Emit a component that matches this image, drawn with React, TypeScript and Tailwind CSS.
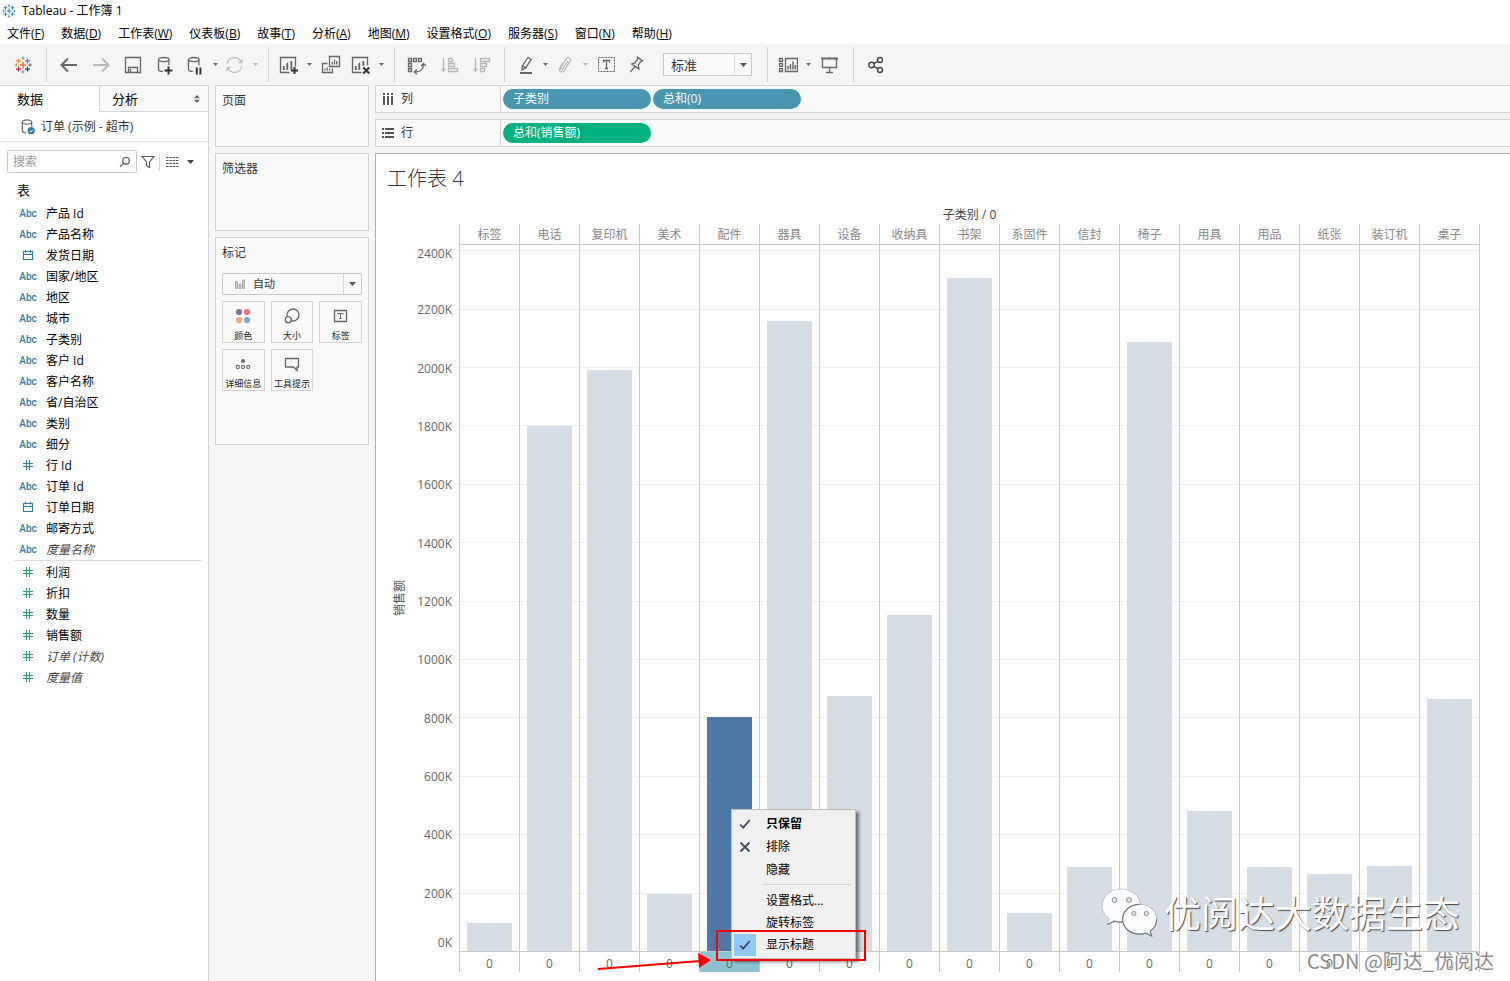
import type { ReactNode } from 'react';
import clsx from 'clsx';

const MENUS = [
  ['文件', 'F'],
  ['数据', 'D'],
  ['工作表', 'W'],
  ['仪表板', 'B'],
  ['故事', 'T'],
  ['分析', 'A'],
  ['地图', 'M'],
  ['设置格式', 'O'],
  ['服务器', 'S'],
  ['窗口', 'N'],
  ['帮助', 'H'],
] as const;

type FieldKind = 'text' | 'date' | 'number';

interface Field {
  name: string;
  kind: FieldKind;
  generated?: boolean;
}

const DIMENSIONS: Field[] = [
  { name: '产品 Id', kind: 'text' },
  { name: '产品名称', kind: 'text' },
  { name: '发货日期', kind: 'date' },
  { name: '国家/地区', kind: 'text' },
  { name: '地区', kind: 'text' },
  { name: '城市', kind: 'text' },
  { name: '子类别', kind: 'text' },
  { name: '客户 Id', kind: 'text' },
  { name: '客户名称', kind: 'text' },
  { name: '省/自治区', kind: 'text' },
  { name: '类别', kind: 'text' },
  { name: '细分', kind: 'text' },
  { name: '行 Id', kind: 'number' },
  { name: '订单 Id', kind: 'text' },
  { name: '订单日期', kind: 'date' },
  { name: '邮寄方式', kind: 'text' },
  { name: '度量名称', kind: 'text', generated: true },
];

const MEASURES: Field[] = [
  { name: '利润', kind: 'number' },
  { name: '折扣', kind: 'number' },
  { name: '数量', kind: 'number' },
  { name: '销售额', kind: 'number' },
  { name: '订单 (计数)', kind: 'number', generated: true },
  { name: '度量值', kind: 'number', generated: true },
];

// Sales in thousands
const SALES = [
  { name: '标签', value: 96 },
  { name: '电话', value: 1800 },
  { name: '复印机', value: 1992 },
  { name: '美术', value: 195 },
  { name: '配件', value: 802 },
  { name: '器具', value: 2160 },
  { name: '设备', value: 874 },
  { name: '收纳具', value: 1152 },
  { name: '书架', value: 2307 },
  { name: '系固件', value: 130 },
  { name: '信封', value: 288 },
  { name: '椅子', value: 2088 },
  { name: '用具', value: 480 },
  { name: '用品', value: 288 },
  { name: '纸张', value: 264 },
  { name: '装订机', value: 291 },
  { name: '桌子', value: 864 },
];

const SELECTED = '配件';
const AXIS_MAX = 2421;
const TICKS = Array.from({ length: 13 }, (_, i) => i * 200);

const percent = (value: number) => `${(value / AXIS_MAX) * 100}%`;

/* ── Icons ── */

function Icon({ children, faded }: { children: ReactNode; faded?: boolean }) {
  return (
    <svg
      width="20"
      height="20"
      viewBox="0 0 20 20"
      fill="none"
      strokeWidth="1.3"
      className={clsx('shrink-0', faded ? 'stroke-[#b8b8b8]' : 'stroke-[#666666]')}
      aria-hidden="true"
    >
      {children}
    </svg>
  );
}

function Caret({ faded }: { faded?: boolean }) {
  return (
    <svg width="5" height="3" viewBox="0 0 5 3" aria-hidden="true">
      <path d="M0 0h5L2.5 3z" fill={faded ? '#b8b8b8' : '#666666'} />
    </svg>
  );
}

function TableauMark({ mono, size }: { mono?: boolean; size: number }) {
  const pick = (color: string) => (mono ? '#3a86b8' : color);
  return (
    <svg width={size} height={size} viewBox="0 0 18 18" fill="none" strokeWidth="1.3" aria-hidden="true">
      <path d="M9 5.8v6.4M5.8 9h6.4" stroke={pick('#e8762c')} strokeWidth="1.5" />
      <path d="M4.5 2.4v5M2 4.9h5" stroke={pick('#eb912c')} />
      <path d="M13.5 2.4v5M11 4.9h5" stroke={pick('#59879b')} />
      <path d="M4.5 10.6v5M2 13.1h5" stroke={pick('#c72035')} />
      <path d="M13.5 10.6v5M11 13.1h5" stroke={pick('#1f447e')} />
      <path d="M9 .4v3.4M7.3 2.1h3.4" stroke={pick('#7099a6')} strokeWidth="1" />
      <path d="M9 14.2v3.4M7.3 15.9h3.4" stroke={pick('#7099a6')} strokeWidth="1" />
      <path d="M2 7.3v3.4M.3 9h3.4" stroke={pick('#eb912c')} strokeWidth="1" />
      <path d="M16 7.3v3.4M14.3 9h3.4" stroke={pick('#5b6591')} strokeWidth="1" />
    </svg>
  );
}

function CylinderPath() {
  return (
    <>
      <ellipse cx="8.7" cy="4.6" rx="5.2" ry="2.1" />
      <path d="M3.5 4.6v9.8c0 1.1 2 1.9 4.4 2M13.9 4.6v5.6" />
    </>
  );
}

function FieldIcon({ kind, measure }: { kind: FieldKind; measure?: boolean }) {
  if (kind === 'text') {
    return <span className="pt-0.5 font-[Roboto,sans-serif] text-[10px] font-medium text-[#2f7d9e]">Abc</span>;
  }
  return (
    <svg
      width="12"
      height="12"
      viewBox="0 0 12 12"
      fill="none"
      strokeWidth="1.1"
      className={measure ? 'stroke-[#2f9e78]' : 'stroke-[#2f7d9e]'}
      aria-hidden="true"
    >
      {kind === 'date' ? (
        <path d="M1.5 2.5h9v8h-9zM1.5 5.5h9M3.5 .8v2.6M8.5 .8v2.6" />
      ) : (
        <path d="M4.5 1v10M7.5 1v10M1 4.5h10M1 7.5h10" />
      )}
    </svg>
  );
}

/* ── Toolbar ── */

function Tool({ label, narrow, children }: { label: string; narrow?: boolean; children: ReactNode }) {
  return (
    <button
      type="button"
      aria-label={label}
      className={clsx('flex h-8 items-center justify-center hover:bg-[#e4e4e4]', narrow ? 'w-7' : 'w-8')}
    >
      {children}
    </button>
  );
}

function ToolMenu({ label, faded }: { label: string; faded?: boolean }) {
  return (
    <button type="button" aria-label={label} className="flex h-8 w-3 items-center justify-center hover:bg-[#e4e4e4]">
      <Caret faded={faded} />
    </button>
  );
}

function ToolGroup({ children }: { children: ReactNode }) {
  return <div className="flex h-[35px] items-center border-l border-[#d4d4d4] pr-[7px] pl-1.5">{children}</div>;
}

function Toolbar() {
  return (
    <div className="flex h-[41px] shrink-0 items-center bg-[#f5f5f5]">
      <button type="button" aria-label="Tableau" className="flex w-[46px] items-center justify-center">
        <TableauMark size={18} />
      </button>

      <ToolGroup>
        <Tool label="撤消">
          <Icon>
            <path d="M18 10H2.8M9 3.5 2.5 10 9 16.5" strokeWidth="2" />
          </Icon>
        </Tool>
        <Tool label="重做">
          <Icon faded>
            <path d="M2 10h15.2M11 3.5l6.5 6.5-6.5 6.5" strokeWidth="2" />
          </Icon>
        </Tool>
        <Tool label="保存">
          <Icon>
            <path d="M2.5 2.5h15v15h-15zM5.5 17.5v-5h9v5M7.5 14v3.5" />
          </Icon>
        </Tool>
        <Tool label="新建数据源">
          <Icon>
            <CylinderPath />
            <path d="M13.5 11.5v8M9.5 15.5h8" stroke="#333333" strokeWidth="2" />
          </Icon>
        </Tool>
        <Tool label="暂停自动更新" narrow>
          <Icon>
            <CylinderPath />
            <path d="M11.8 12.5v7M15.4 12.5v7" stroke="#333333" strokeWidth="2" />
          </Icon>
        </Tool>
        <ToolMenu label="自动更新选项" />
        <Tool label="运行更新" narrow>
          <Icon faded>
            <path d="M2.2 8.6C3 5 6 2.6 9.3 2.6c3 0 5.6 1.6 6.8 4.2M16.8 11c-.7 3.7-3.6 6.3-7 6.3-3 0-5.6-1.6-6.9-4.3" />
            <path d="m13.6 7.4 3.2.2.6-3.2M5.6 12.4l-3.1.2-.6 3.2" />
          </Icon>
        </Tool>
        <ToolMenu label="更新选项" faded />
      </ToolGroup>

      <ToolGroup>
        <Tool label="新建工作表" narrow>
          <Icon>
            <path d="M10.5 17.5h-9v-15h15v9" />
            <path d="M4.8 11v4M8.3 8v7M12.3 6v9" strokeWidth="1.8" />
            <path d="M15.5 12v7M12 15.5h7" stroke="#333333" strokeWidth="2" />
          </Icon>
        </Tool>
        <ToolMenu label="新建选项" />
        <Tool label="复制工作表">
          <Icon>
            <path d="M8.5 1.5h10v10h-10zM6.5 8.5h-5v9h10v-4" />
            <path d="M11.3 7v2.5M13.5 4.5v5M15.7 6v3.5M4 13.5v2M6.3 12.5v3M8.7 13.5v2" />
          </Icon>
        </Tool>
        <Tool label="清除工作表" narrow>
          <Icon>
            <path d="M10.5 17.5h-9v-15h15v8" />
            <path d="M4.8 11v4M8.3 8v7M12.3 6v5" strokeWidth="1.8" />
            <path d="m12.3 12.5 6 6M18.3 12.5l-6 6" stroke="#333333" strokeWidth="2" />
          </Icon>
        </Tool>
        <ToolMenu label="清除选项" />
      </ToolGroup>

      <ToolGroup>
        <Tool label="交换行和列">
          <Icon>
            <path d="M1.5 3.5h3v3h-3zM6.5 3.5h3v3h-3zM11.5 3.5h3v3h-3zM1.5 8.5h3v3h-3zM1.5 13.5h3v3h-3z" />
            <path d="M8 17c5.5 0 8.500-3 8.500-8M14 11l2.500-2.600L19 11M9.800 14.500 7.300 17l2.700 2.200" />
          </Icon>
        </Tool>
        <Tool label="升序排序">
          <Icon faded>
            <path d="M4.500 3v12.500M9.500 3.500h4v3h-4zM9.500 8.500h6v3h-6zM9.500 13.500h9v3h-9z" />
            <path d="M2 13.500h5l-2.500 4z" className="fill-[#b8b8b8]" strokeWidth="0" />
          </Icon>
        </Tool>
        <Tool label="降序排序">
          <Icon faded>
            <path d="M4.500 3v12.500M9.500 3.500h9v3h-9zM9.500 8.500h6v3h-6zM9.500 13.500h4v3h-4z" />
            <path d="M2 13.500h5l-2.500 4z" className="fill-[#b8b8b8]" strokeWidth="0" />
          </Icon>
        </Tool>
      </ToolGroup>

      <ToolGroup>
        <Tool label="突出显示" narrow>
          <Icon>
            <path d="m7.300 10.800 5.700-8.300 3.200 1.900-5.500 8.500-3.700 2zM7.300 10.800l3.400 2.100" />
            <path d="M5 18h12" strokeWidth="2" />
          </Icon>
        </Tool>
        <ToolMenu label="突出显示选项" />
        <Tool label="组成员" narrow>
          <Icon faded>
            <path d="m12.800 6-4.900 7.600c-1 1.500-2.900.4-2-1.100l5.300-8.500c1.700-2.600 5.400-.7 3.900 2.200l-5.800 9.300c-2 3-6.400.8-4.500-2.500l3.600-5.800" />
          </Icon>
        </Tool>
        <ToolMenu label="分组选项" faded />
        <Tool label="显示标记标签">
          <Icon>
            <path d="M1.500 2.500h16v14h-16z" strokeDasharray="2 1" strokeWidth="1" />
            <path d="M6.500 7.500v-2h6v2M9.500 5.500v8M8 13.500h3" />
          </Icon>
        </Tool>
        <Tool label="固定轴" narrow>
          <Icon>
            <path d="m10.500 2 5 3.800-1.500.6-2.700 3.600.6 4.100L4.700 8.900l3.200-1L10.600 4zM7.700 11.800 3.500 17" />
          </Icon>
        </Tool>
        <div className="relative mr-2 ml-3">
          <select
            aria-label="适合"
            className="block h-[23px] w-[89px] appearance-none border border-[#c8c8c8] bg-[#fafafa] pl-[7px] text-[13px] leading-5 text-[#333333]"
          >
            <option>标准</option>
          </select>
          <span className="pointer-events-none absolute inset-y-px right-px flex w-[17px] items-center justify-center border-l border-[#dddddd]">
            <svg width="7" height="4" viewBox="0 0 7 4" aria-hidden="true">
              <path d="M0 0h7L3.500 4z" fill="#555555" />
            </svg>
          </span>
        </div>
      </ToolGroup>

      <ToolGroup>
        <Tool label="显示卡" narrow>
          <Icon>
            <path d="M1.500 3.500h3v2.800h-3zM1.500 8.500h3v2.800h-3zM1.500 13.700h3v2.800h-3zM7.500 3.500h12v13h-12z" />
            <path d="M10 11v3.500M12.500 9v5.500M15 6.500v8M17.300 10v4.500" strokeWidth="1.500" />
          </Icon>
        </Tool>
        <ToolMenu label="显示卡选项" />
        <Tool label="演示模式">
          <Icon>
            <path d="M1 3.500h17" strokeWidth="2" />
            <path d="M2.500 4v8.500h14V4M9.500 2v1.500M9.500 12.500V17M6 17.500h7" />
          </Icon>
        </Tool>
      </ToolGroup>

      <ToolGroup>
        <Tool label="共享">
          <Icon>
            <g stroke="#444444" strokeWidth="1.400">
              <circle cx="5.500" cy="10" r="2.700" />
              <circle cx="14" cy="5" r="2.500" />
              <circle cx="14" cy="15" r="2.500" />
              <path d="m7.800 8.600 4-2.300M7.800 11.400l4 2.300" />
            </g>
          </Icon>
        </Tool>
      </ToolGroup>
    </div>
  );
}

/* ── Data pane ── */

function FieldRow({ field, measure }: { field: Field; measure?: boolean }) {
  return (
    <li className="flex h-[21px] items-center pl-[18px]">
      <span className="flex w-5 items-center justify-center">
        <FieldIcon kind={field.kind} measure={measure} />
      </span>
      <span className={clsx('pt-0.5 pl-2', field.generated ? 'text-[#444444] italic' : 'text-black')}>
        {field.name}
      </span>
    </li>
  );
}

function DataPane() {
  return (
    <aside className="flex w-[209px] shrink-0 flex-col border-t border-r border-[#d4d4d4] bg-white text-[12px] leading-4">
      <div className="flex h-[26px] shrink-0 text-[13px] text-black">
        <button type="button" className="w-[99px] pl-[17px] text-left">
          数据
        </button>
        <button
          type="button"
          className="flex flex-1 items-center justify-between border-b border-l border-[#d4d4d4] bg-[#fafafa] pr-2 pl-3"
        >
          分析
          <svg width="6" height="8" viewBox="0 0 6 8" fill="#666666" aria-hidden="true">
            <path d="M0 3.200h6L3 0zM0 4.800h6L3 8z" />
          </svg>
        </button>
      </div>

      <a href="#orders" className="flex h-[30px] shrink-0 items-center border-b border-[#dddddd] pl-[19px] text-[#333333]">
        <svg width="18" height="18" viewBox="0 0 18 18" fill="none" stroke="#666666" strokeWidth="1.200" aria-hidden="true">
          <ellipse cx="8" cy="4" rx="4.700" ry="2.200" />
          <path d="M3.300 4v8.800c0 1.300 1.700 2 4 2.200M12.700 4v4.500" />
          <circle cx="12.200" cy="12.700" r="3.600" fill="#2f7d9e" stroke="none" />
          <path d="m10.600 12.700 1.200 1.300 2-2.300" stroke="#ffffff" strokeWidth="1" />
        </svg>
        <span className="pl-1">订单 (示例 - 超市)</span>
      </a>

      <div className="mt-2 flex h-[23px] shrink-0 items-center pl-[7px]">
        <div className="relative">
          <input
            type="text"
            aria-label="搜索"
            placeholder="搜索"
            className="block h-[23px] w-[130px] rounded-xs border border-[#c8c8c8] bg-white pr-6 pl-[5px] placeholder:text-[#999999]"
          />
          <svg
            width="12"
            height="12"
            viewBox="0 0 12 12"
            fill="none"
            stroke="#555555"
            strokeWidth="1.200"
            className="pointer-events-none absolute top-1.5 right-1.5"
            aria-hidden="true"
          >
            <circle cx="7" cy="4.800" r="3.300" />
            <path d="m4.600 7.200-3.600 3.600" />
          </svg>
        </div>
        <button type="button" aria-label="筛选字段" className="ml-1">
          <svg width="14" height="14" viewBox="0 0 14 14" fill="none" stroke="#555555" strokeWidth="1.100" aria-hidden="true">
            <path d="M1 1.500h12L8.500 7v5.500l-3-1.800V7z" />
          </svg>
        </button>
        <span className="ml-1 h-[18px] w-px bg-[#d4d4d4]" />
        <button type="button" aria-label="视图选项" className="ml-1.5 flex items-center gap-2">
          <svg width="13" height="10" viewBox="0 0 13 10" stroke="#555555" strokeWidth="1" aria-hidden="true">
            <path d="M0 .5h13M0 3.500h13M0 6.500h13M0 9.500h13" strokeDasharray="2.500 .800" />
          </svg>
          <svg width="7" height="4" viewBox="0 0 7 4" aria-hidden="true">
            <path d="M0 0h7L3.500 4z" fill="#444444" />
          </svg>
        </button>
      </div>

      <h2 className="mt-1.5 h-[23px] pl-[17px] text-[13px] leading-[22px] text-black">表</h2>
      <ul>
        {DIMENSIONS.map((field) => (
          <FieldRow key={field.name} field={field} />
        ))}
      </ul>
      <hr className="mx-1.5 mt-px ml-3.5 border-[#dddddd]" />
      <ul>
        {MEASURES.map((field) => (
          <FieldRow key={field.name} field={field} measure />
        ))}
      </ul>
    </aside>
  );
}

/* ── Cards ── */

function MarkButton({ label, children }: { label: string; children: ReactNode }) {
  return (
    <button
      type="button"
      className="flex h-[42px] flex-col items-center justify-between border border-[#d4d4d4] bg-[#fafafa] pt-1 text-[9px] leading-3 whitespace-nowrap text-[#222222]"
    >
      {children}
      {label}
    </button>
  );
}

function Cards() {
  return (
    <div className="ml-1.5 flex w-[154px] shrink-0 flex-col gap-1.5 text-[12px] leading-4 text-[#333333]">
      <section className="h-[62px] border border-[#d4d4d4] bg-[#fafafa] px-1.5 pt-[7px]">
        <h2>页面</h2>
      </section>
      <section className="h-[78px] border border-[#d4d4d4] bg-[#fafafa] px-1.5 pt-[7px]">
        <h2>筛选器</h2>
      </section>
      <section className="h-[208px] border border-[#d4d4d4] bg-[#fafafa] px-1.5 pt-[7px]">
        <h2>标记</h2>
        <div className="relative mt-3">
          <select
            aria-label="标记类型"
            className="block h-[22px] w-full appearance-none rounded-xs border border-[#c8c8c8] bg-[#fafafa] pl-[30px] text-[11px] leading-4 text-[#333333]"
          >
            <option>自动</option>
          </select>
          <svg
            width="10"
            height="10"
            viewBox="0 0 10 10"
            fill="#cccccc"
            stroke="#a8a8a8"
            className="pointer-events-none absolute top-1.5 left-[13px]"
            aria-hidden="true"
          >
            <path d="M.5 2.500h2v7h-2zM4 5h2v4.500H4zM7.500 1h2v8.500h-2z" />
          </svg>
          <span className="pointer-events-none absolute inset-y-px right-px flex w-[18px] items-center justify-center border-l border-[#d4d4d4]">
            <svg width="7" height="4" viewBox="0 0 7 4" aria-hidden="true">
              <path d="M0 0h7L3.500 4z" fill="#555555" />
            </svg>
          </span>
        </div>
        <div className="mt-1.5 grid grid-cols-3 gap-1.5">
          <MarkButton label="颜色">
            <svg width="20" height="20" viewBox="0 0 20 20" aria-hidden="true">
              <circle cx="6" cy="6" r="3.100" fill="#86709a" />
              <circle cx="14" cy="6" r="3.100" fill="#fb6f7f" />
              <circle cx="6" cy="14" r="3.100" fill="#f4a77a" />
              <circle cx="14" cy="14" r="3.100" fill="#84a7d0" />
            </svg>
          </MarkButton>
          <MarkButton label="大小">
            <Icon>
              <circle cx="11" cy="9" r="6" />
              <circle cx="6.300" cy="13.700" r="3" className="fill-[#fafafa]" />
            </Icon>
          </MarkButton>
          <MarkButton label="标签">
            <Icon>
              <path d="M3.500 4.500h12v11h-12z" />
              <path d="M7 8.500v-1h5v1M9.500 7.500v5M8.300 12.500h2.400" strokeWidth="1.100" />
            </Icon>
          </MarkButton>
          <MarkButton label="详细信息">
            <Icon>
              <circle cx="10" cy="7" r="2" fill="#666666" stroke="none" />
              <circle cx="4.800" cy="13" r="1.600" strokeWidth="1.100" />
              <circle cx="10" cy="13" r="1.600" strokeWidth="1.100" />
              <circle cx="15.200" cy="13" r="1.600" strokeWidth="1.100" />
            </Icon>
          </MarkButton>
          <MarkButton label="工具提示">
            <Icon>
              <path d="M3.500 4.500h13v8.500h-1.500v3.500L11.500 13h-8z" />
            </Icon>
          </MarkButton>
        </div>
      </section>
    </div>
  );
}

/* ── Shelves ── */

function Shelf({ label, icon, children }: { label: string; icon: ReactNode; children: ReactNode }) {
  return (
    <div className="flex h-7 shrink-0 border-y border-l border-[#d4d4d4] bg-[#fafafa] text-[12px] leading-4">
      <div className="flex w-[125px] shrink-0 items-center gap-[7px] border-r border-[#d4d4d4] pl-1.5 text-[#333333]">
        {icon}
        {label}
      </div>
      <div className="flex items-center gap-0.5 pl-0.5">{children}</div>
    </div>
  );
}

function Pill({ label, measure }: { label: string; measure?: boolean }) {
  return (
    <button
      type="button"
      className={clsx(
        'h-5 w-[148px] rounded-full pl-2.5 text-left text-white',
        measure ? 'bg-[#00b180]' : 'bg-[#4996b2]',
      )}
    >
      {label}
    </button>
  );
}

/* ── Worksheet ── */

function MenuItem({ label, icon, bold, checked }: { label: string; icon?: ReactNode; bold?: boolean; checked?: boolean }) {
  return (
    <button type="button" role="menuitem" className="flex h-full w-full items-center gap-2.5 text-left hover:bg-[#e0e0e0]">
      <span className={clsx('flex h-[22px] w-[22px] items-center justify-center', checked && 'bg-[#90c8f6]')}>{icon}</span>
      <span className={clsx(bold && 'font-bold')}>{label}</span>
    </button>
  );
}

function CheckIcon() {
  return (
    <svg width="12" height="12" viewBox="0 0 12 12" fill="none" stroke="#3f4a5c" strokeWidth="1.800" aria-hidden="true">
      <path d="m1.200 6.500 3 3.200L10.800 2" />
    </svg>
  );
}

function ContextMenu() {
  return (
    <div
      role="menu"
      className="absolute bottom-[13px] left-[31px] z-10 w-[125px] border border-[#bdbdbd] bg-[#f0f0f0] p-0.5 text-[12px] leading-4 text-black shadow-[3px_3px_3px_rgba(0,0,0,0.5)]"
    >
      <div className="grid auto-rows-[23px]">
        <MenuItem label="只保留" bold icon={<CheckIcon />} />
        <MenuItem
          label="排除"
          icon={
            <svg width="12" height="12" viewBox="0 0 12 12" stroke="#3f4a5c" strokeWidth="1.800" aria-hidden="true">
              <path d="m1.500 1.500 9 9M10.500 1.500l-9 9" />
            </svg>
          }
        />
        <MenuItem label="隐藏" />
      </div>
      <hr className="mt-[3px] mr-0.5 mb-[5px] ml-7 border-[#d4d4d4]" />
      <div className="grid auto-rows-[22px]">
        <MenuItem label="设置格式..." />
        <MenuItem label="旋转标签" />
        <MenuItem label="显示标题" checked icon={<CheckIcon />} />
      </div>
    </div>
  );
}

/** Red frame and arrow pointing at the selected header */
function Callout() {
  return (
    <>
      <div className="pointer-events-none absolute bottom-[11px] left-4 z-20 h-[31px] w-[150px] border-2 border-[#f80000]" />
      <svg
        width="114"
        height="20"
        viewBox="0 0 114 20"
        className="pointer-events-none absolute right-12 bottom-0 z-20"
        aria-hidden="true"
      >
        <path d="M1 17 103 9" stroke="#f80000" strokeWidth="2" />
        <path d="m101 1 13 7-12 8z" fill="#f80000" />
      </svg>
    </>
  );
}

function Chart() {
  return (
    <div className="flex min-h-0 flex-1 pr-[30px] pb-[9px] text-[12px] leading-4 text-[#666666]">
      <div className="relative my-[21px] w-[83px] shrink-0">
        <span className="absolute top-1/2 left-1.5 -translate-y-1/2 -rotate-90 whitespace-nowrap text-[#555555]">销售额</span>
        {TICKS.map((tick) => (
          <span
            key={tick}
            className="absolute right-[7px] h-4"
            style={{ bottom: `clamp(0px, calc(${percent(tick)} - 9px), calc(100% - 17px))` }}
          >
            {tick}K
          </span>
        ))}
      </div>

      <div className="relative flex-1 border-r border-[#c8c8c8]">
        <div className="absolute top-[21px] right-0 bottom-5 -left-1">
          {TICKS.map((tick) => (
            <div key={tick} className="absolute inset-x-0 h-px bg-[#f0f0f0]" style={{ bottom: percent(tick) }} />
          ))}
        </div>

        <div className="relative grid h-full grid-cols-[repeat(17,minmax(0,1fr))]">
          {SALES.map(({ name, value }) => {
            const selected = name === SELECTED;
            return (
              <div key={name} className="flex min-h-0 flex-col border-l border-[#c8c8c8]">
                <div className="h-[21px] shrink-0 border-b border-[#c8c8c8] pt-[3px] text-center text-[#888888]">{name}</div>
                <div className="flex min-h-0 flex-1 items-end px-[7px]">
                  <div
                    className={clsx('w-full', selected ? 'bg-[#4e79a7]' : 'bg-[#d5dde5]')}
                    style={{ height: percent(value) }}
                  />
                </div>
                <div
                  className={clsx(
                    'relative flex h-[21px] shrink-0 items-center justify-center border-t border-[#c8c8c8] pt-1',
                    selected && 'bg-[#8cc2d2]',
                  )}
                >
                  0
                  {selected && (
                    <>
                      <ContextMenu />
                      <Callout />
                    </>
                  )}
                </div>
              </div>
            );
          })}
        </div>
      </div>
    </div>
  );
}

function Watermarks() {
  return (
    <>
      <div className="pointer-events-none absolute right-[50px] bottom-10 z-30 flex items-center gap-[5px] text-[37px] leading-[52px] whitespace-nowrap text-white [text-shadow:1px_1px_1px_#444444]">
        <svg width="59" height="50" viewBox="0 0 59 52" className="mb-1" aria-hidden="true">
          <g fill="#fafcfd" stroke="#a0a0a0" strokeWidth=".6">
            <path d="M21 2C10 2 1 9.500 1 19.500c0 5.500 2.800 10 7.300 13.300L6.500 39l7-3.500c2.400.7 4.900 1.100 7.500 1.100 11 0 20-7.500 20-17.100S32 2 21 2z" />
            <path d="M40 18c-10 0-17.700 7-17.700 15.500S30 49 40 49c2.300 0 4.500-.4 6.500-1l6 3-1.500-5c4.200-3 6.700-7.400 6.700-12.500C57.700 25 50 18 40 18z" />
          </g>
          <path
            d="M6.500 39l7-3.500c2.800.8 5.600 1.100 8.600 1M22.300 33.500C22.300 42 30 49 40 49c2.300 0 4.500-.4 6.500-1l6 3-1.500-5c4.200-3 6.700-7.400 6.700-12.500M22.300 33.500C22.300 25 30 18 40 18"
            fill="none"
            stroke="#777777"
            strokeWidth="1.200"
          />
          <g fill="#e3e8ec" stroke="#888888" strokeWidth="1">
            <circle cx="14" cy="13.500" r="2.500" />
            <circle cx="29" cy="13.500" r="2.500" />
            <circle cx="34" cy="27.500" r="2.200" />
            <circle cx="47" cy="27.500" r="2.200" />
          </g>
        </svg>
        优阅达大数据生态
      </div>
      <div className="pointer-events-none absolute right-4 bottom-2 z-30 font-['Noto_Sans_CJK_SC',sans-serif] text-[20px] leading-6 whitespace-nowrap text-[#8c8c8c] [text-shadow:1px_1px_0_#ffffff]">
        CSDN @阿达_优阅达
      </div>
    </>
  );
}

export default function App() {
  return (
    <div className="flex h-screen flex-col overflow-hidden bg-[#f5f5f5] font-['Open_Sans','Noto_Sans_CJK_SC',sans-serif]">
      <header className="shrink-0 bg-white text-[12px] leading-4 text-black">
        <div className="flex h-[22px] items-center gap-1.5 pl-0.5">
          <TableauMark mono size={14} />
          <h1>Tableau - 工作簿 1</h1>
        </div>
        <nav className="flex h-[22px] items-center gap-[17px] pt-0.5 pl-[7px]">
          {MENUS.map(([label, key]) => (
            <button key={key} type="button" className="whitespace-nowrap">
              {label}(<u>{key}</u>)
            </button>
          ))}
        </nav>
      </header>

      <Toolbar />

      <div className="flex min-h-0 flex-1">
        <DataPane />
        <Cards />
        <main className="ml-1.5 flex min-w-0 flex-1 flex-col gap-1.5">
          <Shelf
            label="列"
            icon={
              <svg width="12" height="12" viewBox="0 0 12 12" stroke="#555555" strokeWidth="2" aria-hidden="true">
                <path d="M2 0v2M2 3v9M6 0v2M6 3v9M10 0v2M10 3v9" />
              </svg>
            }
          >
            <Pill label="子类别" />
            <Pill label="总和(0)" />
          </Shelf>
          <Shelf
            label="行"
            icon={
              <svg width="12" height="12" viewBox="0 0 12 12" stroke="#555555" strokeWidth="2" aria-hidden="true">
                <path d="M0 2h2M3 2h9M0 6h2M3 6h9M0 10h2M3 10h9" />
              </svg>
            }
          >
            <Pill label="总和(销售额)" measure />
          </Shelf>

          <section className="relative flex min-h-0 flex-1 flex-col border-t border-l border-[#b0b0b0] bg-white">
            <h2 className="flex h-[50px] shrink-0 items-center pl-[11px] text-[20px] leading-6 font-light text-[#333333]">
              工作表 4
            </h2>
            <div className="h-5 shrink-0 pr-[30px] pl-[83px] text-center text-[12px] leading-[22px] text-[#444444]">
              子类别 / 0
            </div>
            <Chart />
            <Watermarks />
          </section>
        </main>
      </div>
    </div>
  );
}
